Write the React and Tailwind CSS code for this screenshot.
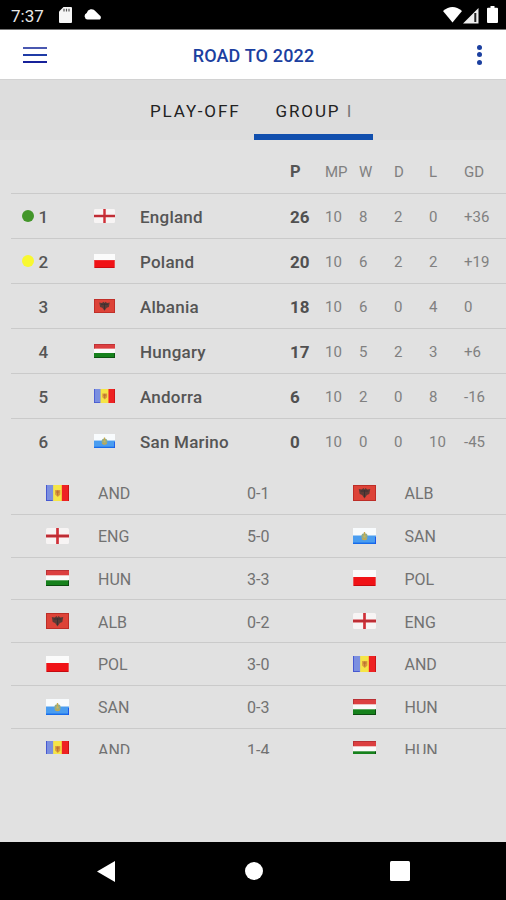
const standings = [
  [1, 'eng', 'England', 26, 10, 8, 2, 0, '+36'],
  [2, 'pol', 'Poland', 20, 10, 6, 2, 2, '+19'],
  [3, 'alb', 'Albania', 18, 10, 6, 0, 4, '0'],
  [4, 'hun', 'Hungary', 17, 10, 5, 2, 3, '+6'],
  [5, 'and', 'Andorra', 6, 10, 2, 0, 8, '-16'],
  [6, 'san', 'San Marino', 0, 10, 0, 0, 10, '-45'],
];

const matches = [
  ['AND', '0-1', 'ALB'],
  ['ENG', '5-0', 'SAN'],
  ['HUN', '3-3', 'POL'],
  ['ALB', '0-2', 'ENG'],
  ['POL', '3-0', 'AND'],
  ['SAN', '0-3', 'HUN'],
  ['AND', '1-4', 'HUN'],
];

const flags = {
  eng: (
    <>
      <rect width="24" height="16" rx="1.5" fill="#f7f4f4" />
      <path d="M0 8h24M12 0v16" stroke="#cf3038" strokeWidth="2.8" />
      <path d="M0 8h24" stroke="#a32a30" strokeWidth="0.8" />
    </>
  ),
  pol: (
    <>
      <rect width="24" height="8" fill="#fbfbfb" />
      <rect y="7" width="24" height="9" fill="#f01216" />
      <path d="M0 15.5h24" stroke="#c40a10" />
      <path d="M.5 7v9M23.5 7v9" stroke="#e85a5c" />
    </>
  ),
  alb: (
    <>
      <rect width="24" height="16" fill="#dd4338" />
      <rect x=".5" y=".5" width="23" height="15" fill="none" stroke="#bd2d27" />
      <path d="M6 4l3 .5L11 3l1 1.500 1-1.500 2 1.500 3-.5-1 5-2.500 1L12 13.500 9.500 10 7 9z" fill="#5c3a35" />
      <path d="M8 6l8 0M12 5v7" stroke="#3a3031" />
    </>
  ),
  hun: (
    <>
      <rect width="24" height="16" fill="#fafafa" />
      <rect width="24" height="5.300" fill="#dc3f40" />
      <path d="M0 .5h24M.5 0v5" stroke="#b83034" />
      <rect y="10.300" width="24" height="5.700" fill="#16811c" />
      <path d="M0 15.500h24M23.500 10.500v5" stroke="#0c4a10" />
    </>
  ),
  and: (
    <>
      <rect width="8" height="16" fill="#7b8fe0" />
      <path d="M.5 0v16M0 15.500h7" stroke="#4557d0" />
      <rect x="7.500" width="9.500" height="16" fill="#f5e547" />
      <rect x="16.500" width="7.500" height="16" fill="#ee2223" />
      <path d="M23.500 0v16" stroke="#c81418" />
      <path d="M9.500 5h5.500v4.500l-2.700 2.500-2.800-2.500z" fill="#d99a3d" />
      <path d="M10.500 7h3.500M12.200 5.500v5" stroke="#b8702f" />
    </>
  ),
  san: (
    <>
      <rect width="24" height="8" fill="#f8fbfd" />
      <rect y="7.500" width="24" height="8.500" fill="#4a9df0" />
      <path d="M0 15.300h24" stroke="#176bea" strokeWidth="1.500" />
      <path d="M23.500 9v7" stroke="#1a55e8" />
      <circle cx="12" cy="8.500" r="3.300" fill="#8fac8b" />
      <path d="M12 4v4M9.500 10.500q2.500 2 5 0" stroke="#c7a94b" strokeWidth="1.400" fill="none" />
      <circle cx="12" cy="8.500" r="1.300" fill="#c9b55c" />
    </>
  ),
};

function Flag({ code, className }) {
  return (
    <svg viewBox="0 0 24 16" preserveAspectRatio="none" className={className}>
      {flags[code]}
    </svg>
  );
}

const rowGrid =
  'ml-[11px] grid grid-cols-[11px_16.500px_55.500px_46px_150px_35px_34px_35px_35px_35px_1fr] items-center';

function StatusBar() {
  return (
    <div className="flex h-[30px] items-center border-b border-[#777] bg-black pt-0.5">
      <span className="ml-[11px] w-[48px] text-[17px] leading-5 text-[#e8e8e8]">7:37</span>
      <svg width="13" height="16" viewBox="0 0 13 16" className="-mt-0.5">
        <path d="M4.500 0H12a1 1 0 0 1 1 1v14a1 1 0 0 1-1 1H1a1 1 0 0 1-1-1V4.500z" fill="#f5f5f5" />
        <path d="M5 1.800v2.700M7.500 1.800v2.700M10 1.800v2.700" stroke="#555" strokeWidth="1.200" />
      </svg>
      <svg width="18" height="12" viewBox="0 0 18 12" className="-mt-1 ml-3">
        <path d="M3.500 11.500a3.400 3.400 0 0 1-.8-6.500A5 5 0 0 1 11.500 3.200L15.500 7.200a2.500 2.500 0 0 1 .3 4.300z" fill="#fff" />
      </svg>
      <svg width="19" height="16" viewBox="0 0 19 16" className="-mt-0.5 ml-auto">
        <path d="M0 4Q9.500-4 19 4L9.500 15.500z" fill="#fff" />
      </svg>
      <svg width="16" height="16" viewBox="0 0 16 16" className="ml-px">
        <path d="M0 15.500L15.500 0v15.500z" fill="#eee" />
        <path d="M12.300 5v9" stroke="#222" strokeWidth="2" />
      </svg>
      <svg width="11" height="17" viewBox="0 0 11 17" className="-mt-0.5 mr-2 ml-2">
        <path d="M3.500 0h4v1.700H10a1 1 0 0 1 1 1V16a1 1 0 0 1-1 1H1a1 1 0 0 1-1-1V2.700a1 1 0 0 1 1-1h2.500z" fill="#fff" />
      </svg>
    </div>
  );
}

export default function App() {
  return (
    <div className="flex h-[900px] w-[506px] flex-col overflow-hidden bg-[#e1e1e1] font-['Roboto','Liberation_Sans',sans-serif]">
      <StatusBar />

      <header className="flex h-[50px] items-center justify-between border-b border-[#d2d2d2] bg-white pr-[23px] pl-[23px]">
        <div className="flex w-6 flex-col gap-[5px]">
          <div className="h-[2px] bg-[#4a58b0]" />
          <div className="h-[2px] bg-[#1f3ba6]" />
          <div className="h-[2px] bg-[#17219a]" />
        </div>
        <h1 className="pt-px pl-px text-[18px] font-medium tracking-[0.150px] text-[#1c3fa0]">ROAD TO 2022</h1>
        <div className="flex w-6 flex-col items-end gap-[2.500px] pr-px">
          <div className="size-[5px] rounded-full bg-[#1b3f9f]" />
          <div className="size-[5px] rounded-full bg-[#1b3f9f]" />
          <div className="size-[5px] rounded-full bg-[#1b3f9f]" />
        </div>
      </header>

      <nav className="flex h-[60px] bg-[#dddddd] pl-[136px] text-[17px] leading-[62px] tracking-[1.900px] text-[#222]">
        <div className="w-[118px] pl-[14px]">PLAY-OFF</div>
        <div className="w-[119px] border-b-6 border-[#114fae] pl-[21.500px] whitespace-nowrap">
          GROUP <span className="text-[#777]">I</span>
        </div>
      </nav>

      <div className="text-[15px] text-[#808080]">
        <div className={`${rowGrid} h-[54px] border-b border-[#cacaca] pt-[11px]`}>
          <span className="col-start-6 text-[16.500px] font-bold text-[#555]">P</span>
          <span>MP</span>
          <span>W</span>
          <span>D</span>
          <span>L</span>
          <span>GD</span>
        </div>
        {standings.map(([rank, flag, name, p, mp, w, d, l, gd]) => (
          <div key={rank} className={`${rowGrid} h-[45px] border-b border-[#cacaca] pt-[3px] last:border-transparent`}>
            <span
              className={`col-start-2 -mt-[3px] size-[11.500px] rounded-full ${
                rank === 1 ? 'bg-[#43962a]' : rank === 2 ? 'bg-[#f8f830]' : 'bg-transparent'
              }`}
            />
            <span className="text-[17px] font-medium text-[#555]">{rank}</span>
            <Flag code={flag} className="-mt-[3px] h-[14px] w-[21px]" />
            <span className="text-[17px] font-medium tracking-[0.230px] text-[#555]">{name}</span>
            <span className="text-[17px] font-bold text-[#505050]">{p}</span>
            <span>{mp}</span>
            <span>{w}</span>
            <span>{d}</span>
            <span>{l}</span>
            <span>{gd}</span>
          </div>
        ))}
      </div>

      <div className="mt-[8px] h-[281.500px] shrink-0 overflow-hidden text-[16px] text-[#727272]">
        {matches.map(([home, score, away], i) => (
          <div
            key={i}
            className="ml-[11px] grid h-[42.750px] grid-cols-[35px_52px_149px_106px_51.500px_1fr] items-center border-b border-[#cacaca] pt-[3px]"
          >
            <Flag code={home.toLowerCase()} className="col-start-2 -mt-[3px] h-4 w-[23px]" />
            <span>{home}</span>
            <span>{score}</span>
            <Flag code={away.toLowerCase()} className="-mt-[3px] h-4 w-[23px]" />
            <span>{away}</span>
          </div>
        ))}
      </div>

      <footer className="mt-auto flex h-[58px] shrink-0 items-center bg-black pl-[97px]">
        <svg width="18" height="21" viewBox="0 0 18 21">
          <path d="M0 10.500L18 0v21z" fill="#fff" />
        </svg>
        <div className="ml-[129.500px] size-[18.500px] rounded-full bg-white" />
        <div className="ml-[126.500px] size-5 rounded-[1.500px] bg-white" />
      </footer>
    </div>
  );
}
